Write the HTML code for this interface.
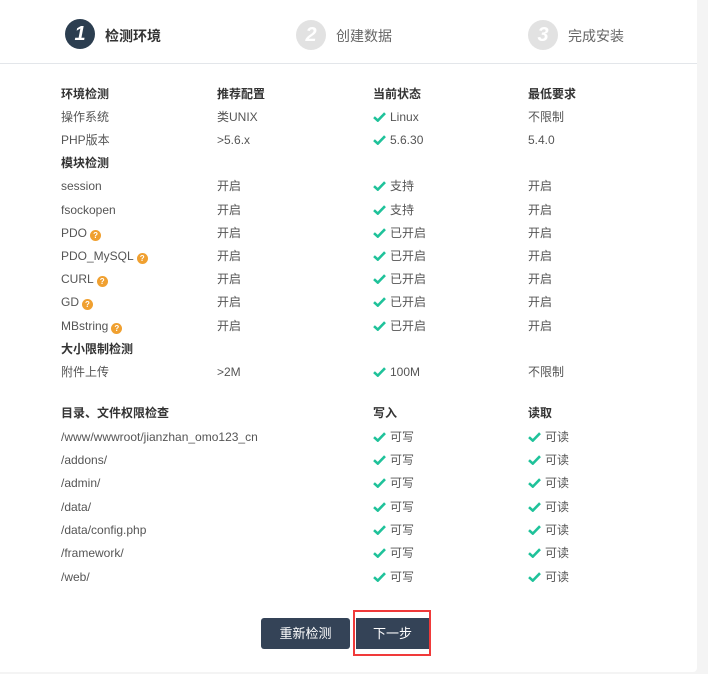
<!DOCTYPE html><html><head><meta charset="utf-8"><style>
body{margin:0;width:708px;height:674px;background:#f4f4f4;font-family:"Liberation Sans","Noto Sans CJK SC",sans-serif;font-size:12px;color:#555;position:relative;overflow:hidden}
.card{position:absolute;left:0;top:0;width:697px;height:672px;background:#fff;border-radius:0 0 4px 0}
.a{position:absolute;white-space:nowrap;line-height:14px}
.b{font-weight:bold;color:#333}
.c{position:absolute;width:30px;height:30px;border-radius:50%;color:#fff;font:italic bold 20px/30px "Liberation Sans",sans-serif;text-align:center}
.st{position:absolute;font-size:14px;line-height:16px}
.ck{display:inline-block;width:13px;height:10px;margin-right:4px;vertical-align:-1px}
.q{display:inline-block;width:11px;height:11px;border-radius:50%;background:#f0a030;color:#fff;font-size:8px;line-height:11px;text-align:center;font-weight:bold;margin-left:3px;vertical-align:-1px}
.btn{position:absolute;background:#344357;color:#fff;font-size:13px;text-align:center;line-height:31px;height:31px;border-radius:3px}
</style></head><body><div class="card">
<div class="c" style="left:65px;top:19px;background:#2c3e50">1</div><div class="st b" style="left:105px;top:28px;color:#333">检测环境</div>
<div class="c" style="left:296px;top:20px;background:#e2e2e2">2</div><div class="st" style="left:336px;top:28px;color:#666">创建数据</div>
<div class="c" style="left:528px;top:20px;background:#e2e2e2">3</div><div class="st" style="left:568px;top:28px;color:#666">完成安装</div>
<div style="position:absolute;left:0;top:63px;width:697px;height:1px;background:#e3e6ea"></div>
<div id="t"></div>
<div class="btn" style="left:261px;top:618px;width:89px">重新检测</div>
<div style="position:absolute;left:353px;top:610px;width:74px;height:42px;border:2px solid #f03a3a"></div>
<div class="btn" style="left:356px;top:618px;width:73px;border-radius:0">下一步</div>
</div>
<script>
var ck='<svg class="ck" viewBox="0 0 13 10"><path d="M1 5.2L4.8 8.6L12 1.2" fill="none" stroke="#1fc29a" stroke-width="2.6"/></svg>';
var q='<span class="q">?</span>';
var rows=[
[94,1,'环境检测','推荐配置','当前状态','最低要求',0],
[117,0,'操作系统','类UNIX','Linux','不限制',1],
[140,0,'PHP版本','&gt;5.6.x','5.6.30','5.4.0',1],
[163,1,'模块检测','','','',0],
[186,0,'session','开启','支持','开启',1],
[210,0,'fsockopen','开启','支持','开启',1],
[233,0,'PDO'+q,'开启','已开启','开启',1],
[256,0,'PDO_MySQL'+q,'开启','已开启','开启',1],
[279,0,'CURL'+q,'开启','已开启','开启',1],
[302,0,'GD'+q,'开启','已开启','开启',1],
[326,0,'MBstring'+q,'开启','已开启','开启',1],
[349,1,'大小限制检测','','','',0],
[372,0,'附件上传','&gt;2M','100M','不限制',1],
[413,1,'目录、文件权限检查','','写入','读取',0],
];
var dirs=['/www/wwwroot/jianzhan_omo123_cn','/addons/','/admin/','/data/','/data/config.php','/framework/','/web/'];
var ys=[437,460,483,507,530,553,577];
var h='';
rows.forEach(function(r){var cls=r[1]?'a b':'a';var y=r[0]-7;
h+='<div class="'+cls+'" style="left:61px;top:'+y+'px">'+r[2]+'</div>';
h+='<div class="'+cls+'" style="left:217px;top:'+y+'px">'+r[3]+'</div>';
h+='<div class="'+cls+'" style="left:373px;top:'+y+'px">'+(r[6]?ck:'')+r[4]+'</div>';
h+='<div class="'+cls+'" style="left:528px;top:'+y+'px">'+r[5]+'</div>';});
dirs.forEach(function(d,i){var y=ys[i]-7;
h+='<div class="a" style="left:61px;top:'+y+'px">'+d+'</div>';
h+='<div class="a" style="left:373px;top:'+y+'px">'+ck+'可写</div>';
h+='<div class="a" style="left:528px;top:'+y+'px">'+ck+'可读</div>';});
document.getElementById('t').innerHTML=h;
</script></body></html>
